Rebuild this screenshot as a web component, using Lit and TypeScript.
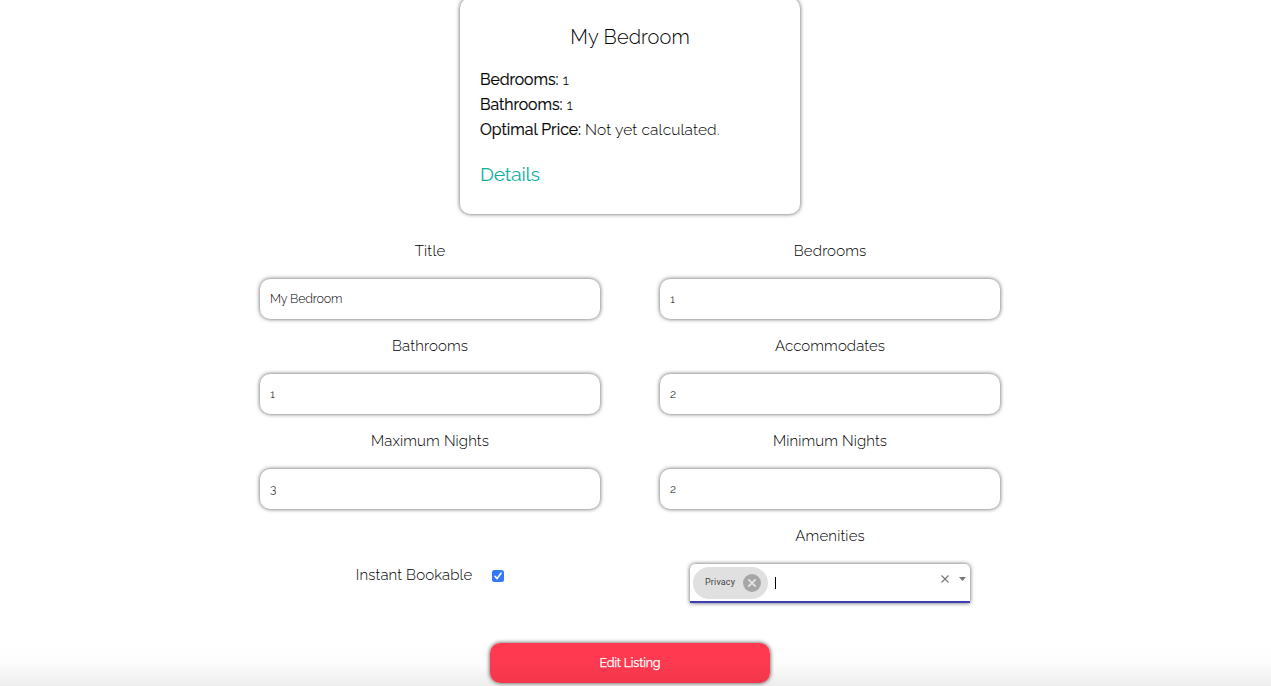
import { LitElement, html, css } from "lit";
import { customElement, property } from "lit/decorators.js";

/** A single line of text whose tracking is adjusted to span a given width. */
@customElement("tracked-text")
class TrackedText extends LitElement {
  @property() text = "";
  @property({ type: Number }) span = 0;

  static styles = css`
    :host { display: inline-block; white-space: pre; }
    .line { display: inline-block; }
  `;

  updated() {
    const line = this.renderRoot.querySelector(".line") as HTMLElement;
    line.style.letterSpacing = "0px";
    const gap = (this.span - line.getBoundingClientRect().width) / Math.max(1, this.text.length - 1);
    line.style.letterSpacing = `${gap}px`;
    line.style.marginRight = `${-gap}px`;
  }

  render() {
    return html`<span class="line">${this.text}</span>`;
  }
}

const t = (text: string, span: number) =>
  html`<tracked-text .text=${text} .span=${span}></tracked-text>`;

const fields = [
  { label: "Title", span: 30.5, value: "My Bedroom", valueSpan: 72.5 },
  { label: "Bedrooms", span: 72.5, value: "1" },
  { label: "Bathrooms", span: 76, value: "1" },
  { label: "Accommodates", span: 110, value: "2" },
  { label: "Maximum Nights", span: 118, value: "3" },
  { label: "Minimum Nights", span: 114, value: "2" },
];

@customElement("app-root")
class AppRoot extends LitElement {
  static styles = css`
    :host {
      display: block;
      height: 686px;
      overflow: hidden;
      color: #000;
      font-family: Raleway, Lato, "Open Sans", sans-serif;
      font-weight: 300;
      font-size: 15px;
      background: linear-gradient(to bottom, #fff 0, #fff 642px, #fcfcfc 664px, #ededed 686px);
    }
    .page { width: 800px; margin-left: 230px; display: flex; flex-direction: column; align-items: center; }
    .card {
      box-sizing: border-box; width: 340px; height: 216px; margin-top: -2px;
      padding: 26px 20px 0; border-radius: 10px; background: #fff;
      box-shadow: 0 0 4px #555;
    }
    .card-title { text-align: center; font-size: 20px; line-height: 26px; margin-bottom: 17px; }
    .row { display: flex; gap: 4px; height: 25px; line-height: 26px; font-size: 15.5px; }
    .row .name { font-weight: 400; font-size: 15.8px; -webkit-text-stroke: 0.2px #000; }
    .details { color: #0faea0; font-weight: 400; font-size: 19.5px; line-height: 26px; margin-top: 20px; }
    .form { display: grid; grid-template-columns: 400px 400px; grid-auto-rows: 95px; padding-top: 25px; }
    .field { display: flex; flex-direction: column; align-items: center; }
    .label { height: 24px; line-height: 25px; margin-bottom: 16px; }
    .input {
      box-sizing: border-box; width: 340px; height: 40px; padding: 0 0 1px 10px;
      display: flex; align-items: center; font-size: 12.5px; color: #000;
      border-radius: 10px; background: #fff; box-shadow: 0 0 4px #555;
    }
    .digit { font-size: 12px; padding-top: 1px; }
    .check { display: flex; align-items: center; justify-content: center; gap: 20px; height: 24px; padding-top: 39px; }
    .check svg { margin-top: 1px; }
    .select {
      box-sizing: border-box; width: 280px; height: 39px; padding: 0 4px 0 3px;
      display: flex; align-items: center; border-radius: 5px 5px 0 0; background: #fff;
      border-bottom: 2px solid #3f3fb5; box-shadow: 0 0 4px #555;
    }
    .chip {
      box-sizing: border-box; width: 75px; height: 32px; border-radius: 16px; background: #e0e0e0;
      display: flex; align-items: center; justify-content: space-between; padding: 0 7px 0 12px;
      font-family: Roboto, sans-serif; font-weight: 400; font-size: 9px; color: #444;
    }
    .chip tracked-text { margin-top: -2px; }
    .caret { width: 1px; height: 12px; margin-left: 7px; background: #000; }
    .tools { margin-left: auto; display: flex; align-items: center; gap: 10px; margin-top: -7px; }
    .button {
      width: 280px; height: 40px; margin-top: 24px; border-radius: 10px;
      display: flex; align-items: center; justify-content: center;
      color: #fff; font-weight: 400; font-size: 12.5px; -webkit-text-stroke: 0.25px #fff;
      background: linear-gradient(to bottom, #ff3a50 0, #ff3a50 35%, #f3374c 100%);
      box-shadow: 0 0 4px #444;
    }
    .button tracked-text { margin-top: -1px; }
    svg { display: block; }
  `;

  render() {
    return html`
      <main class="page">
        <section class="card">
          <div class="card-title">${t("My Bedroom", 119.5)}</div>
          <div class="row"><span class="name">${t("Bedrooms:", 78.5)}</span><span>1</span></div>
          <div class="row"><span class="name">${t("Bathrooms:", 82.5)}</span><span>1</span></div>
          <div class="row"><span class="name">${t("Optimal Price:", 101)}</span>${t("Not yet calculated.", 134.5)}</div>
          <div class="details">${t("Details", 60)}</div>
        </section>
        <section class="form">
          ${fields.map(
            (f) => html`<div class="field">
              <div class="label">${t(f.label, f.span)}</div>
              <div class="input">
                ${f.valueSpan ? t(f.value, f.valueSpan) : html`<span class="digit">${f.value}</span>`}
              </div>
            </div>`
          )}
          <div class="check">
            ${t("Instant Bookable", 116.5)}
            <svg width="12" height="12" viewBox="0 0 12 12">
              <rect width="12" height="12" rx="2.5" fill="#3478f6" />
              <path d="M3 6.3 5.1 8.6 9 3.2" fill="none" stroke="#fff" stroke-width="1.6" stroke-linecap="round" stroke-linejoin="round" />
            </svg>
          </div>
          <div class="field">
            <div class="label">${t("Amenities", 69.5)}</div>
            <div class="select">
              <div class="chip">
                ${t("Privacy", 30)}
                <svg width="18" height="18" viewBox="0 0 18 18">
                  <circle cx="9" cy="9" r="9" fill="#a6a6a6" />
                  <path d="M5.3 5.3l7.4 7.4M12.7 5.3l-7.4 7.4" stroke="#e4e4e4" stroke-width="1.8" />
                </svg>
              </div>
              <div class="caret"></div>
              <div class="tools">
                <svg width="8" height="8" viewBox="0 0 8 8"><path d="M.5 .5l7 7M7.5 .5l-7 7" stroke="#757575" stroke-width="1.1" /></svg>
                <svg width="7" height="4" viewBox="0 0 7 4"><path d="M0 0h7L3.5 4z" fill="#757575" /></svg>
              </div>
            </div>
          </div>
        </section>
        <div class="button">${t("Edit Listing", 61)}</div>
      </main>
    `;
  }
}
